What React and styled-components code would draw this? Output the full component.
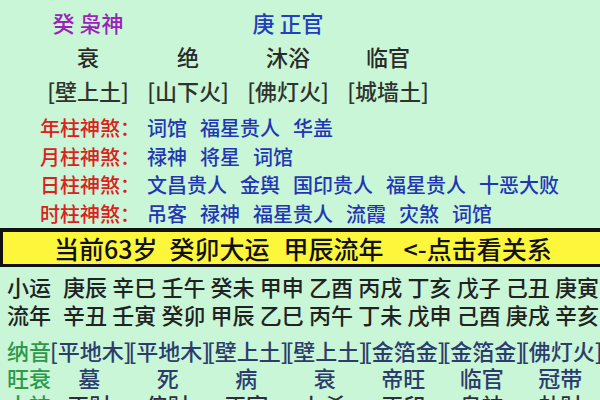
import React from "react";
import styled, { createGlobalStyle } from "styled-components";

const GlobalStyle = createGlobalStyle`
  html, body {
    margin: 0;
    padding: 0;
    background: #c9f6d6;
  }
  body {
    font-family: "Noto Sans CJK SC", "Noto Sans", sans-serif;
    font-weight: 500;
    overflow: hidden;
  }
`;

const Page = styled.div`
  width: 600px;
  height: 400px;
  overflow: hidden;
  background: #c9f6d6;
`;

const PillarGrid = styled.div`
  display: grid;
  grid-template-columns: repeat(4, 100px);
  grid-auto-rows: 34px;
  align-items: center;
  justify-items: center;
  padding: 5px 0 0 38px;
  font-size: 22px;
  line-height: 1;
`;

const tones = {
  purple: "#9a22b8",
  blue: "#2340b8",
  dark: "#2a2a2a",
  bracket: "#2e332e",
};

const PillarCell = styled.div`
  color: ${(p) => tones[p.$tone] || tones.dark};
  white-space: pre;
  grid-column: ${(p) => p.$col || "auto"};
`;

const ShenshaList = styled.div`
  padding: 6.5px 0 0 40px;
`;

const ShenshaRow = styled.div`
  height: 28.7px;
  display: flex;
  align-items: center;
  font-size: 20px;
  line-height: 1;
  white-space: nowrap;
`;

const ShenshaLabel = styled.span`
  color: #dc2020;
  margin-right: 7px;
`;

const ShenshaItems = styled.span`
  display: flex;
  gap: 13px;
  color: #2236b4;
`;

const Bar = styled.div`
  height: 32px;
  display: flex;
  align-items: center;
  background: #fdf63a;
  border-top: 4px solid #111;
  border-bottom: 3px solid #111;
  border-left: 3px solid #111;
  padding-left: 51px;
  font-size: 25px;
  line-height: 1;
  color: #111;
  white-space: nowrap;
`;

const BarPart = styled.span`
  margin-right: ${(p) => p.$gap || 0}px;
`;

const LuckBlock = styled.div`
  padding-top: 5px;
`;

const LuckRow = styled.div`
  height: 27.5px;
  display: flex;
  align-items: center;
  padding-left: 7px;
  font-size: 22px;
  line-height: 1;
  color: #222;
  white-space: nowrap;
`;

const LuckLabel = styled.span`
  flex: 0 0 56px;
`;

const LuckItems = styled.span`
  display: flex;
  gap: 5.2px;
`;

const Table = styled.div`
  margin-top: 9px;
`;

const TableRow = styled.div`
  height: 27px;
  display: grid;
  grid-template-columns: 43px repeat(7, 78.5px);
  align-items: center;
  padding-left: 7px;
  font-size: 22px;
  line-height: 1;
  white-space: nowrap;
`;

const TableLabel = styled.span`
  color: #2c9a4c;
`;

const TableCell = styled.span`
  text-align: center;
  color: ${(p) => (p.$dark ? "#2b2f3a" : "#2c3c6c")};
`;

const shensha = [
  ["年柱神煞：", ["词馆", "福星贵人", "华盖"]],
  ["月柱神煞：", ["禄神", "将星", "词馆"]],
  ["日柱神煞：", ["文昌贵人", "金舆", "国印贵人", "福星贵人", "十恶大败"]],
  ["时柱神煞：", ["吊客", "禄神", "福星贵人", "流霞", "灾煞", "词馆"]],
];

const xiaoyun = ["庚辰", "辛巳", "壬午", "癸未", "甲申", "乙酉", "丙戌", "丁亥", "戊子", "己丑", "庚寅"];
const liunian = ["辛丑", "壬寅", "癸卯", "甲辰", "乙巳", "丙午", "丁未", "戊申", "己酉", "庚戌", "辛亥"];

const table = [
  ["纳音", ["[平地木]", "[平地木]", "[壁上土]", "[壁上土]", "[金箔金]", "[金箔金]", "[佛灯火]"]],
  ["旺衰", ["墓", "死", "病", "衰", "帝旺", "临官", "冠带"]],
  ["十神", ["正财", "偏财", "正官", "七杀", "正印", "枭神", "劫财"], true],
];

export default function App() {
  return (
    <Page>
      <GlobalStyle />
      <PillarGrid>
        <PillarCell $tone="purple" $col="1">癸 枭神</PillarCell>
        <PillarCell $tone="blue" $col="3">庚 正官</PillarCell>
        <PillarCell $tone="dark" $col="1">衰</PillarCell>
        <PillarCell $tone="dark">绝</PillarCell>
        <PillarCell $tone="dark">沐浴</PillarCell>
        <PillarCell $tone="dark">临官</PillarCell>
        <PillarCell $tone="bracket">[壁上土]</PillarCell>
        <PillarCell $tone="bracket">[山下火]</PillarCell>
        <PillarCell $tone="bracket">[佛灯火]</PillarCell>
        <PillarCell $tone="bracket">[城墙土]</PillarCell>
      </PillarGrid>
      <ShenshaList>
        {shensha.map(([label, items]) => (
          <ShenshaRow key={label}>
            <ShenshaLabel>{label}</ShenshaLabel>
            <ShenshaItems>
              {items.map((it, i) => (
                <span key={i}>{it}</span>
              ))}
            </ShenshaItems>
          </ShenshaRow>
        ))}
      </ShenshaList>
      <Bar>
        <BarPart $gap={12}>当前63岁</BarPart>
        <BarPart $gap={14}>癸卯大运</BarPart>
        <BarPart $gap={20}>甲辰流年</BarPart>
        <BarPart>&lt;-点击看关系</BarPart>
      </Bar>
      <LuckBlock>
        <LuckRow>
          <LuckLabel>小运</LuckLabel>
          <LuckItems>
            {xiaoyun.map((g, i) => (
              <span key={i}>{g}</span>
            ))}
          </LuckItems>
        </LuckRow>
        <LuckRow>
          <LuckLabel>流年</LuckLabel>
          <LuckItems>
            {liunian.map((g, i) => (
              <span key={i}>{g}</span>
            ))}
          </LuckItems>
        </LuckRow>
      </LuckBlock>
      <Table>
        {table.map(([label, cells, dark]) => (
          <TableRow key={label}>
            <TableLabel>{label}</TableLabel>
            {cells.map((c, i) => (
              <TableCell key={i} $dark={dark}>
                {c}
              </TableCell>
            ))}
          </TableRow>
        ))}
      </Table>
    </Page>
  );
}
